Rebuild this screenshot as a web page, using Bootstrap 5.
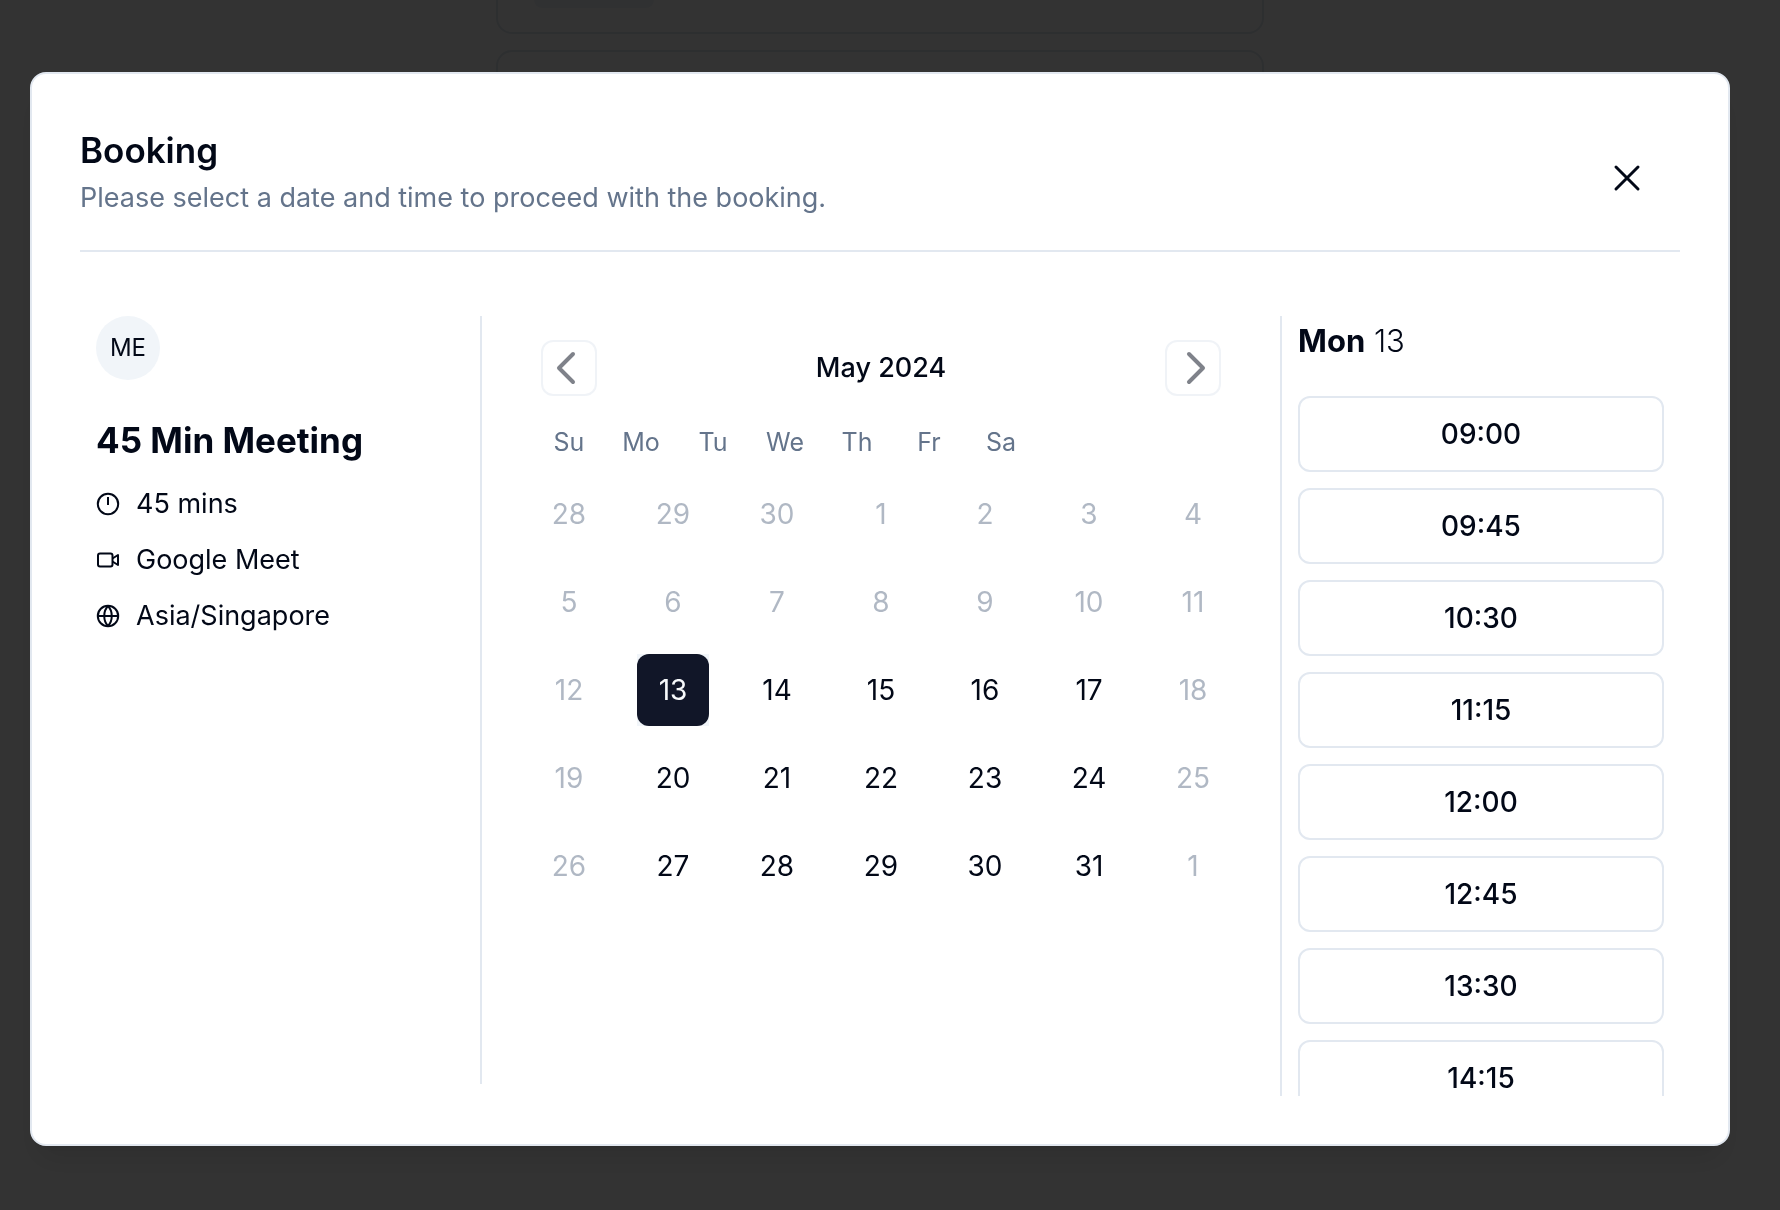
<!DOCTYPE html>
<html lang="en">
<head>
<meta charset="utf-8">
<meta name="viewport" content="width=device-width, initial-scale=1">
<title>Booking</title>
<link href="https://cdn.jsdelivr.net/npm/bootstrap@5.3.0/dist/css/bootstrap.min.css" rel="stylesheet">
<style>
  :root { --ink: #020817; --muted: #64748b; --line: #e2e8f0; --soft: #f1f5f9; --navy: #111628; }
  body { font-family: Inter, "Liberation Sans", sans-serif; font-size: 27px; line-height: 40px; color: var(--ink); background: #fff; overflow: hidden; }
  .page-list { width: 768px; padding-bottom: 16px; }
  .page-card { border: 2px solid var(--line); border-radius: 16px; height: 400px; }
  .page-card.first-card { height: 34px; border-top: 0; border-radius: 0 0 16px 16px; padding-left: 36px; }
  .page-chip { width: 120px; height: 8px; background: var(--soft); border-radius: 0 0 12px 12px; }
  .page-end { padding-right: 20px; }
  .overlay { inset: 0; background: rgba(0, 0, 0, .8); padding: 72px 50px 0 30px; }
  .booking-dialog { background: #fff; border: 2px solid var(--line); border-radius: 16px; padding: 48px; box-shadow: 0 20px 30px -6px rgba(0, 0, 0, .1), 0 8px 12px -8px rgba(0, 0, 0, .1); }
  .booking-head { border-bottom: 2px solid var(--line); padding-bottom: 16px; margin-bottom: 64px; }
  .head-text { padding: 10px 0 16px; gap: 10px; }
  .title-lg { font-size: 35px; line-height: 36px; font-weight: 600; }
  .text-soft { color: var(--muted); }
  .close-btn { width: 58px; height: 56px; color: var(--ink); }
  .info-col { border-right: 2px solid var(--line); padding: 0 16px; margin-bottom: 12px; margin-right: -2px; }
  .avatar { width: 64px; height: 64px; background: var(--soft); font-size: 24px; margin-bottom: 40px; }
  .event-title { font-size: 35px; line-height: 40px; font-weight: 700; margin-bottom: 24px; }
  .calendar { width: 100%; max-width: 698px; padding: 24px 0 0 2px; }
  .nav-btn { width: 56px; height: 56px; border: 2px solid var(--line); border-radius: 12px; opacity: .5; color: var(--ink); background: #fff; }
  .cal-table th { width: 72px; font-size: 25px; line-height: 38px; font-weight: 400; color: var(--muted); text-align: center; }
  .cal-table thead { padding-top: 26px; display: block; }
  .cal-table tr { margin-bottom: 16px; }
  .day { width: 72px; height: 72px; border: 0; border-radius: 12px; background: transparent; color: var(--ink); font-size: 28px; }
  .day:disabled { color: var(--muted); opacity: .5; }
  .day-on { background: var(--navy); color: #f8fafc; }
  .cell-on { background: var(--soft); }
  .slots-col { border-left: 2px solid var(--line); padding: 0 16px; height: 780px; overflow: hidden; }
  .slots-day { font-size: 31px; line-height: 50px; margin-bottom: 14px; }
  .slot { height: 76px; flex-shrink: 0; border: 2px solid var(--line); border-radius: 12px; background: #fff; color: var(--ink); font-size: 28px; font-weight: 500; }
</style>
<script src="https://cdn.jsdelivr.net/npm/bootstrap@5.3.0/dist/js/bootstrap.bundle.min.js"></script>
</head>
<body>
<main class="page-end" aria-hidden="true">
  <div class="page-list d-flex flex-column gap-3 mx-auto">
    <div class="page-card first-card"><div class="page-chip"></div></div>
    <div class="page-card"></div>
  </div>
</main>
<div class="overlay position-fixed">
  <section class="booking-dialog" role="dialog" aria-modal="true" aria-labelledby="dlg-title">
    <header class="booking-head d-flex align-items-center justify-content-between">
      <div class="head-text d-flex flex-column">
        <h1 class="title-lg m-0" id="dlg-title">Booking</h1>
        <p class="text-soft m-0">Please select a date and time to proceed with the booking.</p>
      </div>
      <button type="button" class="close-btn btn border-0 p-0 me-4 d-flex align-items-center justify-content-center" aria-label="Close">
        <svg width="48" height="48" viewBox="0 0 24 24" fill="none" stroke="currentColor" stroke-width="1.5" stroke-linecap="round"><path d="M6.5 6.5l11 11M17.5 6.5l-11 11"/></svg>
      </button>
    </header>
    <div class="row g-0">
      <div class="col-3 d-flex flex-column">
        <div class="info-col flex-grow-1">
          <div class="avatar rounded-circle d-flex align-items-center justify-content-center">ME</div>
          <h2 class="event-title">45 Min Meeting</h2>
          <ul class="list-unstyled m-0 d-flex flex-column gap-3">
            <li class="d-flex align-items-center gap-3">
              <svg width="24" height="24" viewBox="0 0 24 24" fill="none" stroke="currentColor" stroke-width="2"><circle cx="12" cy="12" r="10.2"/><path d="M12 5v8"/></svg>45 mins</li>
            <li class="d-flex align-items-center gap-3">
              <svg width="24" height="24" viewBox="0 0 24 24" fill="none" stroke="currentColor" stroke-width="2" stroke-linejoin="round"><rect x="2" y="5.5" width="14.5" height="13" rx="2"/><path d="M16.5 10.5l5.5-3.5v10l-5.500-3.500"/></svg>Google Meet</li>
            <li class="d-flex align-items-center gap-3">
              <svg width="24" height="24" viewBox="0 0 24 24" fill="none" stroke="currentColor" stroke-width="2"><circle cx="12" cy="12" r="10.2"/><path d="M2 12h20M12 2c-5 5-5 15 0 20M12 2c5 5 5 15 0 20"/></svg>Asia/Singapore</li>
          </ul>
        </div>
      </div>
      <div class="col-6">
        <div class="calendar mx-auto">
          <div class="d-flex align-items-center justify-content-between px-2">
            <button type="button" class="nav-btn p-0 d-flex align-items-center justify-content-center" aria-label="Previous month">
              <svg width="40" height="40" viewBox="0 0 40 40" fill="none" stroke="currentColor" stroke-width="4" stroke-linecap="round" stroke-linejoin="round"><path d="M24 6L10 20l14 14"/></svg>
            </button>
            <span class="fw-medium" id="month">May 2024</span>
            <button type="button" class="nav-btn p-0 d-flex align-items-center justify-content-center" aria-label="Next month">
              <svg width="40" height="40" viewBox="0 0 40 40" fill="none" stroke="currentColor" stroke-width="4" stroke-linecap="round" stroke-linejoin="round"><path d="M16 6l14 14-14 14"/></svg>
            </button>
          </div>
          <table class="cal-table d-block w-100" aria-labelledby="month">
            <thead><tr class="d-flex"><th>Su</th><th>Mo</th><th>Tu</th><th>We</th><th>Th</th><th>Fr</th><th>Sa</th></tr></thead>
            <tbody class="d-block" id="days"></tbody>
          </table>
        </div>
      </div>
      <div class="col-3">
        <div class="slots-col d-flex flex-column gap-3" id="slots">
          <div class="slots-day fw-light"><span class="fw-bold">Mon</span> 13</div>
        </div>
      </div>
    </div>
  </section>
</div>
<script>
  // The grid runs from Sunday 28 April to Saturday 1 June; weekends and past days are off.
  const body = document.getElementById('days');
  for (let w = 0; w < 5; w++) {
    const tr = document.createElement('tr');
    tr.className = 'd-flex justify-content-between';
    for (let d = 0; d < 7; d++) {
      const date = new Date(2024, 3, 28 + w * 7 + d);
      const td = document.createElement('td');
      const b = document.createElement('button');
      b.type = 'button';
      b.className = 'day p-0 d-block';
      b.textContent = date.getDate();
      b.disabled = d === 0 || d === 6 || w < 2;
      if (w === 2 && d === 1) { b.classList.add('day-on'); td.className = 'cell-on'; }
      td.className += ' p-0';
      td.append(b);
      tr.append(td);
    }
    body.append(tr);
  }
  // Slots of 45 minutes from 09:00.
  for (let i = 0; i < 8; i++) {
    const m = 540 + i * 45;
    const b = document.createElement('button');
    b.type = 'button';
    b.className = 'slot w-100 p-0';
    b.textContent = String(Math.floor(m / 60)).padStart(2, '0') + ':' + String(m % 60).padStart(2, '0');
    document.getElementById('slots').append(b);
  }
</script>
</body>
</html>
